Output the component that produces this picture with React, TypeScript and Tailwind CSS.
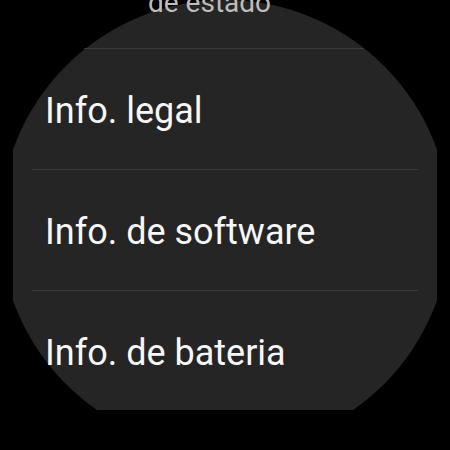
import React from "react";

function Divider({ className }: { className: string }) {
  return <div className={`h-px bg-[#3b3b3b] ${className}`} />;
}

function Row({ label }: { label: string }) {
  return (
    <div className="h-[120px] flex items-center pl-[45px] pt-[3px] text-[36px] leading-[42px] text-[#f7f7f7] whitespace-nowrap">
      {label}
    </div>
  );
}

export default function App() {
  return (
    <div className="relative w-[450px] h-[450px] bg-black overflow-hidden font-['Roboto',sans-serif]">
      <div className="absolute left-0 top-0 w-[450px] h-[450px] rounded-full bg-[#252525] [clip-path:inset(0_13px_40px_13px)]" />
      <div className="relative flex flex-col">
        <div className="h-[48px]">
          <div className="-mt-[13px] pl-[148px] text-[28px] leading-[32px] text-[#bdbdbd] whitespace-nowrap">
            de estado
          </div>
        </div>
        <Divider className="ml-[84px] w-[280px]" />
        <Row label="Info. legal" />
        <Divider className="ml-[32px] w-[386px]" />
        <Row label="Info. de software" />
        <Divider className="ml-[32px] w-[386px]" />
        <Row label="Info. de bateria" />
      </div>
    </div>
  );
}
